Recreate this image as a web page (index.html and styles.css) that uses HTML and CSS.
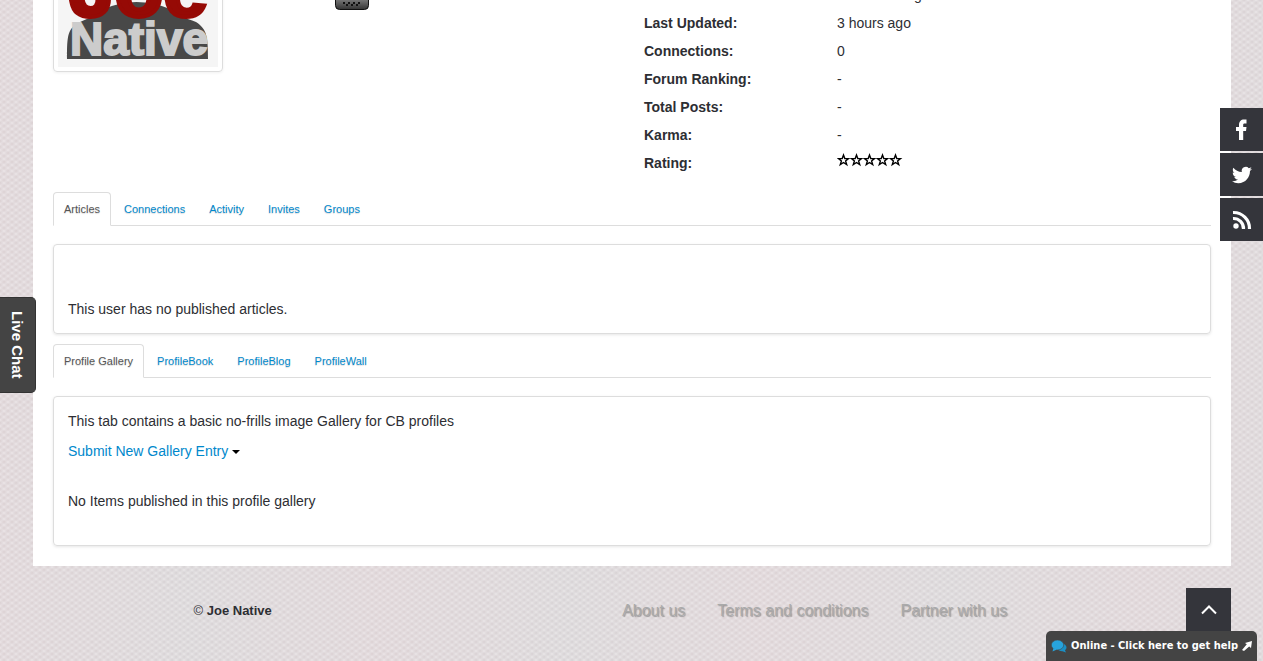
FILE: index.html
```html
<!DOCTYPE html>
<html lang="en">
<head>
  <meta charset="UTF-8">
  <meta name="viewport" content="width=device-width, initial-scale=1.0">
  <title>Joe Native</title>
  <link rel="stylesheet" href="styles.css">
</head>
<body>
  <main class="page">
    <section class="profile">
      <div class="profile-left">
        <div class="thumbnail">
          <svg width="160" height="160" viewBox="0 0 160 160" role="img" aria-label="Joe Native">
            <rect width="160" height="160" fill="#f5f5f5"/>
            <path d="M9 152 C9 128 10 122 20 116 C32 110 40 108 46 102 Q78 88 112 102 C118 108 128 111 138 115 C149 122 150 130 150 152 Z" fill="#484848"/>
            <text class="logo-joe" x="12" y="109">Joe</text>
            <text class="logo-native" x="12" y="148">Native</text>
          </svg>
        </div>
        <svg class="status-icon" width="34" height="34" viewBox="0 0 34 34">
          <defs>
            <linearGradient id="metal" x1="0" y1="0" x2="0" y2="1">
              <stop offset="0" stop-color="#999"/>
              <stop offset="0.7" stop-color="#777"/>
              <stop offset="1" stop-color="#333"/>
            </linearGradient>
          </defs>
          <rect x="0.5" y="0.5" width="33" height="33" rx="4" fill="url(#metal)" stroke="#111"/>
          <path d="M8 27h2M13 27h2M18 27h2M23 27h2M11 29h2M16 29h2M21 29h2" stroke="#111" stroke-width="2"/>
        </svg>
      </div>
      <table class="details">
        <tr><th scope="row">Member Since:</th><td>10 months ago</td></tr>
        <tr><th scope="row">Last Updated:</th><td>3 hours ago</td></tr>
        <tr><th scope="row">Connections:</th><td>0</td></tr>
        <tr><th scope="row">Forum Ranking:</th><td>-</td></tr>
        <tr><th scope="row">Total Posts:</th><td>-</td></tr>
        <tr><th scope="row">Karma:</th><td>-</td></tr>
        <tr>
          <th scope="row">Rating:</th>
          <td>
            <svg class="stars" width="66" height="14" viewBox="0 0 66 14">
              <defs>
                <path id="star" d="M6.5 2 L7.8 5.5 L11.5 5.6 L8.6 8 L9.7 11.6 L6.5 9.5 L3.3 11.6 L4.4 8 L1.5 5.6 L5.2 5.5 Z" fill="#fff" stroke="#000" stroke-width="1.4"/>
              </defs>
              <use href="#star"/>
              <use href="#star" x="13"/>
              <use href="#star" x="26"/>
              <use href="#star" x="39"/>
              <use href="#star" x="52"/>
            </svg>
          </td>
        </tr>
      </table>
    </section>

    <nav class="tabs">
      <a class="tab active" href="#articles">Articles</a>
      <a class="tab" href="#connections">Connections</a>
      <a class="tab" href="#activity">Activity</a>
      <a class="tab" href="#invites">Invites</a>
      <a class="tab" href="#groups">Groups</a>
    </nav>
    <section class="panel" id="articles">
      <p class="empty-articles">This user has no published articles.</p>
    </section>

    <nav class="tabs">
      <a class="tab active" href="#gallery">Profile Gallery</a>
      <a class="tab" href="#book">ProfileBook</a>
      <a class="tab" href="#blog">ProfileBlog</a>
      <a class="tab" href="#wall">ProfileWall</a>
    </nav>
    <section class="panel" id="gallery">
      <p>This tab contains a basic no-frills image Gallery for CB profiles</p>
      <p class="submit"><a href="#new-entry">Submit New Gallery Entry</a> <span class="caret"></span></p>
      <p class="empty-gallery">No Items published in this profile gallery</p>
    </section>
  </main>

  <footer class="footer">
    <p class="copyright">© <strong>Joe Native</strong></p>
    <nav class="footer-links">
      <a href="#about">About us</a>
      <a href="#terms">Terms and conditions</a>
      <a href="#partner">Partner with us</a>
    </nav>
  </footer>

  <div class="social">
    <a href="#facebook" aria-label="Facebook">
      <svg width="22" height="22" viewBox="0 0 22 22"><path d="M8 21V12H5V8H8V6C8 2.500 10 0.500 13 0.500H15.500V4.500H13.700C12.500 4.500 12.200 5 12.200 6V8H15.500L15 12H12.200V21Z" fill="#fff"/></svg>
    </a>
    <a href="#twitter" aria-label="Twitter">
      <svg width="20" height="20" viewBox="0 0 24 24"><path d="M23.950 4.570a10 10 0 0 1-2.820.770 4.960 4.960 0 0 0 2.160-2.720c-.950.550-2 .950-3.130 1.180a4.920 4.920 0 0 0-8.380 4.480C7.690 8.090 4.070 6.130 1.640 3.160a4.820 4.820 0 0 0-.670 2.470c0 1.710.870 3.210 2.190 4.100a4.900 4.900 0 0 1-2.230-.620v.060a4.920 4.920 0 0 0 3.950 4.830 5 5 0 0 1-2.210.080 4.940 4.940 0 0 0 4.600 3.420A9.870 9.870 0 0 1 0 19.540a13.990 13.990 0 0 0 7.550 2.210c9.050 0 14-7.500 14-13.990 0-.210 0-.420-.020-.630a9.940 9.940 0 0 0 2.460-2.550z" fill="#fff"/></svg>
    </a>
    <a href="#rss" aria-label="RSS">
      <svg width="20" height="20" viewBox="0 0 20 20"><circle cx="4" cy="16" r="2.700" fill="#fff"/><path d="M1 8.500A10 10 0 0 1 11.500 19M1 2.500A16 16 0 0 1 17.500 19" fill="none" stroke="#fff" stroke-width="3.200"/></svg>
    </a>
  </div>

  <button class="live-chat" type="button">Live Chat</button>

  <a class="to-top" href="#" aria-label="Back to top">
    <svg width="16" height="10" viewBox="0 0 16 10"><path d="M1 8.500L8 1.500L15 8.500" fill="none" stroke="#fff" stroke-width="2"/></svg>
  </a>

  <button class="chat-bar" type="button">
    <svg width="16" height="14" viewBox="0 0 16 14"><path d="M9 4.500C13 4 15.500 6 15.500 8.300C15.500 9.500 15 10.500 14 11.200L15 13.500L11.500 12.200C9.500 12.300 8 11.800 7 10.800Z" fill="#1b8fc4"/><ellipse cx="6.500" cy="6" rx="6.200" ry="5" fill="#27a3dc" stroke="#444" stroke-width="0.600"/><path d="M2.500 9L1.500 12.500L6 10.500Z" fill="#27a3dc"/></svg>
    <span>Online - Click here to get help</span>
    <svg width="10" height="10" viewBox="0 0 10 10"><path d="M10 0L9 7L7.200 5.400L2 10L0 9L4.800 3.300L3 2Z" fill="#fff"/></svg>
  </button>
</body>
</html>
```
FILE: styles.css
```css
body {
  margin: 0;
  font-family: "Liberation Sans", Arial, sans-serif;
  font-size: 14px;
  line-height: 20px;
  color: #2d2e33;
  background-color: #d6cfd1;
  background-image:
    radial-gradient(ellipse at center, rgba(255, 255, 255, 0.5) 0, rgba(255, 255, 255, 0) 70%),
    radial-gradient(ellipse at center, rgba(255, 255, 255, 0.5) 0, rgba(255, 255, 255, 0) 70%),
    linear-gradient(90deg, rgba(220, 206, 210, 0.5), rgba(210, 209, 212, 0.5), rgba(220, 206, 210, 0.5));
  background-size: 8px 6px, 8px 6px, 380px 100%;
  background-position: 0 0, 4px 3px, 0 0;
  overflow: hidden;
}
p {
  margin: 0;
}
a {
  color: #0088cc;
  text-decoration: none;
}

/* the page is shown part way down, so the profile head starts above the window */
.page {
  margin: -118px 32px 0 33px;
  padding: 20px;
  background: #fff;
}
.profile {
  display: grid;
  grid-template-columns: 1fr 1fr;
  min-height: 275px;
  margin-bottom: 15px;
}
.profile-left {
  display: flex;
  align-items: flex-start;
  gap: 112px;
}
.thumbnail {
  padding: 4px;
  border: 1px solid #ddd;
  border-radius: 4px;
  box-shadow: 0 1px 3px rgba(0, 0, 0, 0.06);
}
.thumbnail svg {
  display: block;
}
.logo-joe {
  font-size: 80px;
  font-weight: bold;
  fill: #960a05;
  stroke: #960a05;
  stroke-width: 4px;
}
.logo-native {
  font-size: 46px;
  font-weight: bold;
  fill: #ccc;
  stroke: #ccc;
  stroke-width: 2px;
}
.status-icon {
  margin-top: 74px;
}

.details {
  align-self: end;
  width: 100%;
  table-layout: fixed;
  border-collapse: collapse;
}
.details th,
.details td {
  box-sizing: border-box;
  height: 28px;
  padding: 0 0 0 12px;
  text-align: left;
}
.details th {
  width: 193px;
}
.stars {
  display: block;
  margin-bottom: 6px;
}

.tabs {
  display: flex;
  gap: 2px;
  margin-bottom: 18px;
  border-bottom: 1px solid #ddd;
}
.tab {
  margin-bottom: -1px;
  padding: 7px 10px;
  border: 1px solid transparent;
  border-radius: 4px 4px 0 0;
  font-size: 11px;
  line-height: 18px;
  text-shadow: 0 1px 1px rgba(0, 0, 0, 0.15);
}
.tab.active {
  color: #555;
  background: #fff;
  border-color: #ddd #ddd #fff;
}
.panel {
  padding: 14px;
  border: 1px solid #ddd;
  border-radius: 4px;
  box-shadow: 0 1px 3px rgba(0, 0, 0, 0.1);
}
.panel + .tabs {
  margin-top: 10px;
}
.empty-articles {
  margin-top: 40px;
}
.submit {
  margin-top: 10px;
}
.caret {
  display: inline-block;
  border: 4px solid transparent;
  border-top-color: #000;
  border-bottom: 0;
  vertical-align: middle;
}
.empty-gallery {
  margin: 30px 0 20px;
}

.footer {
  display: grid;
  grid-template-columns: 1fr 2fr;
  margin: 0 32px 0 33px;
  padding: 35px 0 40px;
}
.copyright {
  font-size: 13px;
  text-align: center;
}
.footer-links {
  display: flex;
  justify-content: center;
  gap: 32px;
  padding-right: 34px;
  font-size: 16px;
}
.footer-links a {
  color: #aaa;
  text-shadow: 1px 1px 1px rgba(0, 0, 0, 0.3);
}

.social {
  position: fixed;
  top: 108px;
  right: 0;
  display: grid;
  gap: 2px;
}
.social a {
  display: grid;
  place-items: center;
  width: 43px;
  height: 43px;
  background: #34353b;
}
.live-chat {
  position: fixed;
  top: 297px;
  left: 0;
  width: 36px;
  padding: 13px 8px 13px 6px;
  border: 1px solid #333;
  border-left: 0;
  border-radius: 0 5px 5px 0;
  background: #444;
  color: #fff;
  font: bold 15px/20px "Liberation Sans", Arial, sans-serif;
  writing-mode: vertical-rl;
}
.to-top {
  position: fixed;
  right: 32px;
  bottom: 30px;
  display: grid;
  place-items: center;
  width: 45px;
  height: 43px;
  background: #34353b;
}
.chat-bar {
  position: fixed;
  right: 6px;
  bottom: 0;
  display: flex;
  align-items: center;
  gap: 4px;
  height: 30px;
  padding: 0 5px;
  border: 0;
  border-radius: 5px 5px 0 0;
  background: #444;
  color: #fff;
  font: bold 11px/16px "DejaVu Sans Condensed", "DejaVu Sans", sans-serif;
}
```
